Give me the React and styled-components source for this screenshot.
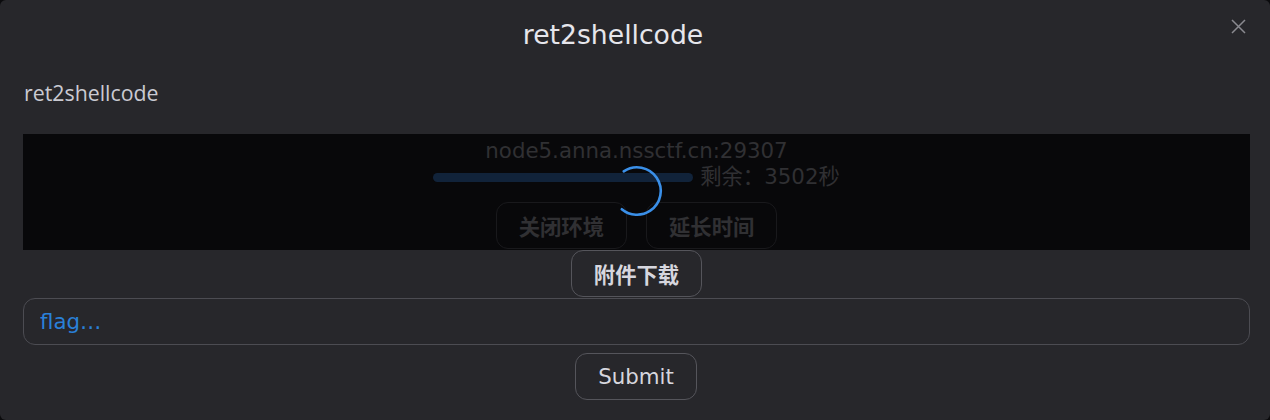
import React from "react";
import styled, { createGlobalStyle } from "styled-components";

const Global = createGlobalStyle`
  html, body { margin: 0; padding: 0; background: #0b0b0d; }
  body { font-family: "DejaVu Sans", "Noto Sans CJK SC", sans-serif; }
  * { box-sizing: border-box; }
`;

const Modal = styled.div`
  position: relative;
  width: 1270px;
  height: 420px;
  background: #27272b;
  border-radius: 6px;
  padding: 19px 20px 20px 23px;
  display: flex;
  flex-direction: column;
  align-items: stretch;
  overflow: hidden;
`;

const Title = styled.h2`
  margin: 0;
  font-weight: 400;
  font-size: 26.67px;
  line-height: 31px;
  text-align: center;
  color: #e6e6ec;
  padding-right: 47px;
`;

const Close = styled.button`
  position: absolute;
  top: 18px;
  right: 24px;
  width: 16px;
  height: 16px;
  padding: 0;
  border: 0;
  background: transparent;
  display: flex;
  align-items: center;
  justify-content: center;
`;

const Label = styled.div`
  margin-top: 28px;
  padding-left: 1px;
  font-family: "Open Sans", "Noto Sans", sans-serif;
  font-size: 21.33px;
  line-height: 29px;
  color: #cacad2;
`;

const Panel = styled.div`
  margin-top: 27px;
  width: 1227px;
  height: 116px;
  background: #08080a;
  padding-top: 4px;
  display: flex;
  flex-direction: column;
  align-items: center;
  position: relative;
`;

const Host = styled.div`
  font-size: 21.33px;
  line-height: 26px;
  color: #303033;
`;

const TimeRow = styled.div`
  display: flex;
  align-items: center;
  gap: 7px;
  height: 26px;
`;

const Bar = styled.div`
  width: 260px;
  height: 9px;
  border-radius: 5px;
  background: #11233a;
`;

const Remain = styled.span`
  font-size: 21.33px;
  line-height: 26px;
  color: #303033;
`;

const PanelActions = styled.div`
  margin-top: 12px;
  display: flex;
  gap: 19px;
`;

const Btn = styled.button`
  height: 47px;
  padding: 0 22px;
  border-radius: 12px;
  background: transparent;
  font-family: ${(p) => (p.$cjk ? '"Noto Sans CJK SC", sans-serif' : '"DejaVu Sans", sans-serif')};
  font-weight: ${(p) => (p.$cjk ? 700 : 400)};
  font-size: 21.33px;
  line-height: 1;
  color: ${(p) => (p.$dim ? "#303033" : "#d6d6de")};
  border: 1px solid ${(p) => (p.$dim ? "#19191c" : "#55555b")};
`;

const Spinner = styled.svg`
  position: absolute;
  left: 587px;
  top: 30px;
`;

const Center = styled.div`
  display: flex;
  justify-content: center;
  margin-top: ${(p) => p.$mt || 0}px;
  padding-right: ${(p) => p.$pr || 0}px;
`;

const Input = styled.input`
  margin-top: 1px;
  width: 1227px;
  height: 47px;
  border: 1px solid #4c4c52;
  border-radius: 12px;
  background: transparent;
  padding: 0 16px;
  font-family: "DejaVu Sans", sans-serif;
  font-size: 21.33px;
  color: #d6d6de;
  outline: none;
  &::placeholder { color: #2a80d8; }
`;

export default function App() {
  const r = 23.75;
  const c = 2 * Math.PI * r;
  return (
    <>
      <Global />
      <Modal>
        <Title>ret2shellcode</Title>
        <Close aria-label="close">
          <svg width="15" height="15" viewBox="0 0 15 15">
            <path d="M1 1 L14 14 M14 1 L1 14" stroke="#8a8a90" strokeWidth="1.5" fill="none" />
          </svg>
        </Close>
        <Label>ret2shellcode</Label>
        <Panel>
          <Host>node5.anna.nssctf.cn:29307</Host>
          <TimeRow>
            <Bar />
            <Remain>剩余：3502秒</Remain>
          </TimeRow>
          <PanelActions>
            <Btn $cjk $dim>关闭环境</Btn>
            <Btn $cjk $dim>延长时间</Btn>
          </PanelActions>
          <Spinner width="54" height="54" viewBox="0 0 54 54">
            <circle
              cx="27"
              cy="27"
              r={r}
              fill="none"
              stroke="#3a8fe8"
              strokeWidth="2.6"
              strokeLinecap="round"
              strokeDasharray={`${(c * 252) / 360} ${c}`}
              transform="rotate(-124 27 27)"
            />
          </Spinner>
        </Panel>
        <Center>
          <Btn $cjk>附件下载</Btn>
        </Center>
        <Input placeholder="flag…" />
        <Center $mt={8} $pr={1}>
          <Btn>Submit</Btn>
        </Center>
      </Modal>
    </>
  );
}
